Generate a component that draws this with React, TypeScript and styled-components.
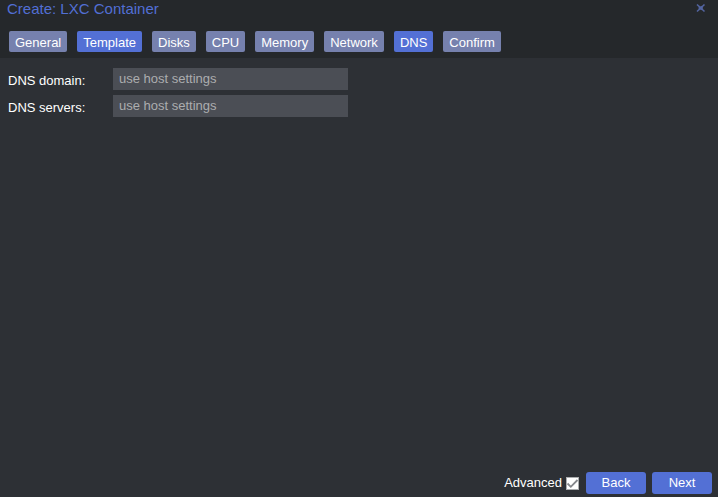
import React, { useState } from "react";
import styled, { createGlobalStyle } from "styled-components";

const GlobalStyle = createGlobalStyle`
  * { box-sizing: border-box; }
  body { margin: 0; background: #2d3035; }
  body, button, input { font: 13px/16px "Liberation Sans", Arial, sans-serif; }
`;

const Dialog = styled.form`
  display: flex;
  flex-direction: column;
  min-height: 100vh;
  background: #2d3035;
  color: #fff;
`;

const Header = styled.header`
  background: #25282b;
  padding-bottom: 6px;
`;

const TitleBar = styled.div`
  display: flex;
  align-items: flex-start;
  justify-content: space-between;
  height: 31px;
  padding: 0 12px 0 7px;
`;

const Title = styled.h1`
  margin: 0;
  color: #526fd4;
  font-size: 15px;
  font-weight: 400;
  line-height: 18px;
`;

const CloseButton = styled.button`
  display: flex;
  padding: 3px 0;
  border: 0;
  background: none;
  color: #53649f;
  cursor: pointer;
`;

const Tabs = styled.nav`
  display: flex;
  gap: 10px;
  padding: 0 9px;
`;

const Tab = styled.button<{ $active: boolean }>`
  height: 21px;
  padding: 2px 6px 0;
  border: 0;
  border-radius: 2px;
  background: ${(p) => (p.$active ? "#5370d5" : "#7681ae")};
  color: #fff;
  white-space: nowrap;
  cursor: pointer;
`;

const Fields = styled.main`
  display: flex;
  flex: 1;
  flex-direction: column;
  gap: 5px;
  padding: 10px 8px;
`;

const Field = styled.div`
  display: flex;
`;

const FieldLabel = styled.label`
  width: 105px;
  padding-top: 5px;
`;

const TextInput = styled.input`
  width: 235px;
  height: 22px;
  padding: 0 6px 2px;
  border: 0;
  border-radius: 0;
  background: #4b4e55;
  color: #fff;
  &::placeholder { color: #abadaf; opacity: 1; }
`;

const Footer = styled.footer`
  display: flex;
  align-items: center;
  justify-content: flex-end;
  gap: 6px;
  padding: 0 6px 3px;
`;

const AdvancedLabel = styled.label`
  display: flex;
  align-items: center;
  gap: 4px;
  margin-right: 1px;
`;

const CheckWrap = styled.span`
  display: grid;
  width: 13px;
  height: 13px;
  > * { grid-area: 1 / 1; }
`;

const CheckInput = styled.input`
  width: 13px;
  height: 13px;
  margin: 0;
  appearance: none;
  border: 1px solid #aaacae;
  background: #fff;
  & + svg { visibility: hidden; pointer-events: none; }
  &:checked + svg { visibility: visible; }
`;

const ActionButton = styled.button`
  width: 60px;
  height: 22px;
  padding: 0;
  border: 0;
  border-radius: 3px;
  background: #5370d5;
  color: #fff;
  cursor: pointer;
`;

const steps = [
  { name: "General" },
  { name: "Template", active: true },
  { name: "Disks" },
  { name: "CPU" },
  { name: "Memory" },
  { name: "Network" },
  { name: "DNS", active: true },
  { name: "Confirm" },
];

export default function App() {
  const [advanced, setAdvanced] = useState(true);
  return (
    <>
      <GlobalStyle />
      <Dialog onSubmit={(e) => e.preventDefault()}>
        <Header>
          <TitleBar>
            <Title>Create: LXC Container</Title>
            <CloseButton type="button" aria-label="Close">
              <svg width="10" height="10" viewBox="0 0 10 10" fill="none" stroke="currentColor">
                <path d="M1 1.5 8.5 8.5M8.5 1.5 1 8.5" strokeWidth="1.6" />
                <path d="M3 3.5 6.5 6.5M6.5 3.5 3 6.5" strokeWidth="2.2" />
              </svg>
            </CloseButton>
          </TitleBar>
          <Tabs aria-label="Container setup">
            {steps.map((step) => (
              <Tab key={step.name} type="button" $active={!!step.active}>
                {step.name}
              </Tab>
            ))}
          </Tabs>
        </Header>
        <Fields>
          <Field>
            <FieldLabel htmlFor="domain">DNS domain:</FieldLabel>
            <TextInput id="domain" placeholder="use host settings" />
          </Field>
          <Field>
            <FieldLabel htmlFor="servers">DNS servers:</FieldLabel>
            <TextInput id="servers" placeholder="use host settings" />
          </Field>
        </Fields>
        <Footer>
          <AdvancedLabel>
            Advanced
            <CheckWrap>
              <CheckInput
                type="checkbox"
                checked={advanced}
                onChange={(e) => setAdvanced(e.target.checked)}
              />
              <svg width="13" height="13" viewBox="0 0 13 13" fill="none" stroke="#85878b" strokeWidth="1.8">
                <path d="M1.5 6.5 4.8 9.8 11.5 3" />
              </svg>
            </CheckWrap>
          </AdvancedLabel>
          <ActionButton type="button">Back</ActionButton>
          <ActionButton type="submit">Next</ActionButton>
        </Footer>
      </Dialog>
    </>
  );
}
